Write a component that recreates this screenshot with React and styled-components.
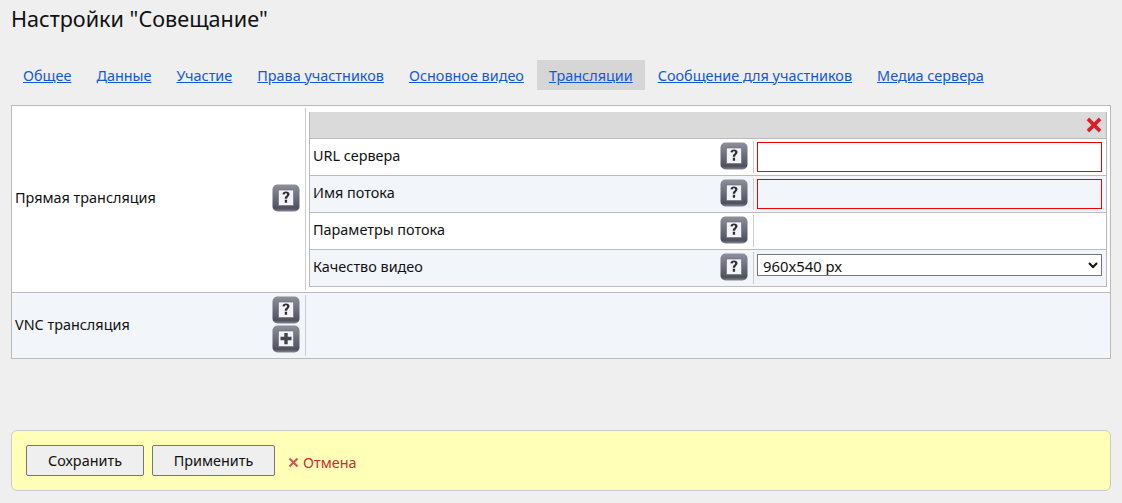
import React from "react";
import styled, { createGlobalStyle } from "styled-components";

const Global = createGlobalStyle`
  html, body { margin: 0; padding: 0; background: #efefef; }
  body { font-family: "Noto Sans", sans-serif; font-size: 14.42px; color: #111; }
  * { box-sizing: border-box; }
`;
const Page = styled.div`
  width: 1122px; height: 503px; padding: 0 11px; overflow: hidden;
`;
const Title = styled.h1`
  margin: 0; height: 60px; padding-top: 4px; font-size: 21.6px; line-height: 30px; font-weight: 400; color: #111;
`;
const Tabs = styled.nav`
  display: flex; gap: 1px; height: 30px; margin-bottom: 15px;
`;
const Tab = styled.a`
  display: flex; align-items: center; padding: 0 12px; color: #1558d6; text-decoration: underline;
  background: ${p => (p.$active ? "#d6d6d6" : "transparent")};
`;
const Panel = styled.section`
  border: 1px solid #bbb; background: #fff; height: 254px;
`;
const OuterRow = styled.div`
  display: grid; grid-template-columns: 294px 1fr; height: ${p => p.$h}px;
  background: ${p => (p.$alt ? "#f2f5fa" : "#fff")};
  border-top: ${p => (p.$alt ? "1px solid #bbb" : "none")};
`;
const Label = styled.div`
  display: flex; align-items: center; justify-content: space-between; padding: 0 5px 2px 3px; margin: 2px 0;
  border-right: 1px solid #ccc;
`;
const LabelText = styled.span`
  padding-bottom: ${p => (p.$up ? 2 : 0)}px;
`;
const IconStack = styled.div`
  display: flex; flex-direction: column; gap: 1px;
`;
const Body = styled.div`
  padding: 6px 3px 0 3px;
`;
const Inner = styled.div`
  border: 1px solid #bbb; border-top: none; height: 175px;
`;
const InnerHead = styled.div`
  height: 27px; background: #dadada; border-bottom: 1px solid #bbb; display: flex; justify-content: flex-end; align-items: center; padding: 0 4px 0 0;
`;
const InnerRow = styled.div`
  display: grid; grid-template-columns: 444px 1fr; height: ${p => (p.$last ? 36 : 37)}px; background: ${p => (p.$alt ? "#f2f5fa" : "#fff")};
  border-bottom: ${p => (p.$last ? "none" : "1px solid #bbb")};
`;
const InnerLabel = styled.div`
  display: flex; align-items: center; justify-content: space-between; padding: 0 5px 3px 3px; margin: 2px 0;
  border-right: 1px solid #ccc;
`;
const Value = styled.div`
  display: flex; align-items: center; padding: 0 4px 0 3px;
`;
const TextInput = styled.input`
  width: 100%; height: 30px; border: 1px solid #e00; background: ${p => (p.$alt ? "#f2f5fa" : "#fff")}; outline: none; padding: 0 4px;
  font: inherit;
`;
const Select = styled.select`
  width: 100%; height: 22px; margin-bottom: 7px; border: 1px solid #767676; background: #fff; font-family: inherit; font-size: 14.8px; color: #111; border-radius: 0; padding: 0 0 0 1px;
`;
const Spacer = styled.div`
  height: 71px;
`;
const Footer = styled.footer`
  height: 61px; background: #ffffb8; border: 1px solid #ccc; border-radius: 6px; display: flex; align-items: center; padding: 0 14px; gap: 8px;
`;
const Button = styled.button`
  width: ${p => p.$w}px; height: 31px; background: #efefef; border: 1px solid #767676; border-radius: 2px; font: inherit; color: #111; padding: 0;
`;
const Cancel = styled.a`
  margin-left: 5px; margin-top: 4px; color: #c9302c; display: flex; align-items: center; gap: 4px;
`;

const IconBtn = ({ plus }) => (
  <svg width="28" height="28" viewBox="0 0 28 28">
    <defs>
      <linearGradient id={plus ? "gp" : "gq"} x1="0" y1="0" x2="0" y2="1">
        <stop offset="0" stopColor="#8d8f9b" />
        <stop offset="0.8" stopColor="#555767" />
        <stop offset="0.88" stopColor="#4d4f5e" />
        <stop offset="1" stopColor="#858791" />
      </linearGradient>
    </defs>
    <rect x="0.5" y="0.5" width="27" height="27" rx="5" fill={`url(#${plus ? "gp" : "gq"})`} />
    <rect x="6.500" y="6" width="15" height="15.500" fill="#f4f4f7" stroke="#6a6c7a" strokeWidth="0.6" />
    {plus ? (
      <path d="M12.300 8h3.400v3.800h3.800v3.400h-3.800v4h-3.400v-4H8.500v-3.400h3.800z" fill="#42444f" />
    ) : (
      <path d="M10.500 10.300c0-1.800 1.500-2.800 3.500-2.800s3.500 1 3.500 2.800c0 2.200-2.300 2.300-2.400 4.500h-2.300c0-2.800 2.300-2.900 2.300-4.500 0-.6-.5-1-1.100-1-.8 0-1.200.5-1.200 1.200zM12.800 15.800h2.300v3h-2.300z" fill="#2b2d3c" />
    )}
  </svg>
);
const CloseIcon = () => (
  <svg width="16" height="16" viewBox="0 0 16 16">
    <path d="M1.800 1.800 14.200 14.200M14.200 1.800 1.800 14.200" stroke="#eaa0a0" strokeWidth="4.200" />
    <path d="M2 2 14 14M14 2 2 14" stroke="#d81f26" strokeWidth="3.400" />
  </svg>
);
const SmallX = () => (
  <svg width="11" height="11" viewBox="0 0 11 11">
    <path d="M1.500 1.500 9.500 9.500M9.500 1.500 1.500 9.500" stroke="#d9534f" strokeWidth="2" />
  </svg>
);

const tabs = ["Общее", "Данные", "Участие", "Права участников", "Основное видео", "Трансляции", "Сообщение для участников", "Медиа сервера"];

export default function App() {
  return (
    <Page>
      <Global />
      <Title>Настройки "Совещание"</Title>
      <Tabs>
        {tabs.map(t => <Tab key={t} href="#" $active={t === "Трансляции"}>{t}</Tab>)}
      </Tabs>
      <Panel>
        <OuterRow $h={186}>
          <Label><LabelText $up>Прямая трансляция</LabelText><IconBtn /></Label>
          <Body>
            <Inner>
              <InnerHead><CloseIcon /></InnerHead>
              <InnerRow>
                <InnerLabel><LabelText>URL сервера</LabelText><IconBtn /></InnerLabel>
                <Value><TextInput /></Value>
              </InnerRow>
              <InnerRow $alt>
                <InnerLabel><LabelText>Имя потока</LabelText><IconBtn /></InnerLabel>
                <Value><TextInput $alt /></Value>
              </InnerRow>
              <InnerRow>
                <InnerLabel><LabelText>Параметры потока</LabelText><IconBtn /></InnerLabel>
                <Value />
              </InnerRow>
              <InnerRow $alt $last>
                <InnerLabel><LabelText>Качество видео</LabelText><IconBtn /></InnerLabel>
                <Value>
                  <Select defaultValue="960"><option value="960">960x540 px</option></Select>
                </Value>
              </InnerRow>
            </Inner>
          </Body>
        </OuterRow>
        <OuterRow $h={66} $alt>
          <Label><LabelText>VNC трансляция</LabelText><IconStack><IconBtn /><IconBtn plus /></IconStack></Label>
          <div />
        </OuterRow>
      </Panel>
      <Spacer />
      <Footer>
        <Button $w={118}>Сохранить</Button>
        <Button $w={123}>Применить</Button>
        <Cancel><SmallX />Отмена</Cancel>
      </Footer>
    </Page>
  );
}
